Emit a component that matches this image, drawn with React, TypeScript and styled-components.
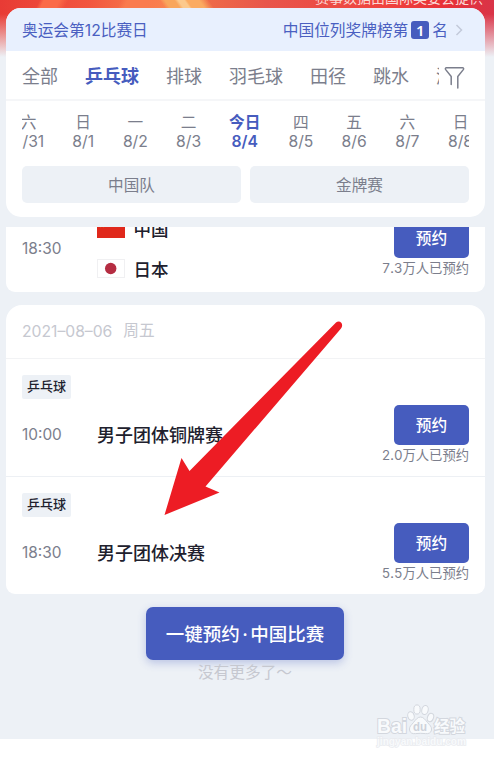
import React from 'react';
import styled, { createGlobalStyle } from 'styled-components';

const Global = createGlobalStyle`
  *, *::before, *::after { box-sizing: border-box; }
  body {
    margin: 0;
    background: #fff;
    font-family: Inter, 'Noto Sans CJK SC', sans-serif;
    color: #7b7e8c;
  }
`;

const Page = styled.main`
  position: relative;
  width: 494px;
  height: 759px;
  overflow: hidden;
  background: #fff;
`;

const Screen = styled.div`
  height: 739px;
  padding: 0 9px 0 6px;
  background:
    linear-gradient(180deg, transparent 14px, #edf1f6 57px) 0 0 / 100% 58px no-repeat,
    linear-gradient(55deg, transparent 0 136px, #f9a65c 140px 148px, #fcc98c 151px 156px, #fbab62 158px 168px, transparent 176px) 0 0 / 240px 9px no-repeat,
    linear-gradient(115deg, transparent 0 36px, #fb6a48 40px 54px, transparent 62px 110px, #fa7b4e 116px 134px, transparent 190px) 0 0 / 100% 9px no-repeat,
    linear-gradient(90deg, #e83b35 0, #f2553f 18%, #f67a4b 29%, #f8a055 36%, #ee6a48 42%, #e8554b 54%, #f0433f 78%, #e83138 90%, #d93448 100%) 0 0 / 100% 58px no-repeat,
    #edf1f6;
`;

const Credit = styled.div`
  height: 8px;
  padding-right: 2px;
  display: flex;
  align-items: flex-end;
  justify-content: flex-end;
  overflow: hidden;
  font-size: 14px;
  line-height: 18px;
  color: #fbd9d6;
  span { margin-bottom: 1px; white-space: nowrap; }
`;

const FilterPanel = styled.section`
  height: 209px;
  border-radius: 15px;
  overflow: hidden;
  background: #fff;
`;

const MedalBar = styled.header`
  height: 43px;
  padding: 2px 22px 0 16px;
  display: flex;
  align-items: center;
  background: #e8f0fe;
  color: #4a5fc1;
  font-size: 15.7px;
  line-height: 24px;
`;

const MedalRank = styled.div`
  margin-left: auto;
  display: flex;
  align-items: center;
`;

const RankBadge = styled.b`
  width: 18px;
  height: 18px;
  margin: -1px 3px 0;
  border-radius: 3px;
  background: #465cbe;
  color: #fff;
  font: 600 15px/18px 'Noto Sans', sans-serif;
  text-align: center;
`;

const Chevron = styled.svg`
  width: 8px;
  height: 12px;
  margin: -1px 0 0 7px;
  fill: none;
  stroke: #c3cada;
  stroke-width: 1.5;
`;

const TabBar = styled.nav`
  height: 50px;
  padding: 3px 19px 0 16px;
  display: flex;
  align-items: center;
  border-bottom: 2px solid #f5f6f8;
`;

const TabList = styled.div`
  width: 417px;
  display: flex;
  gap: 27px;
  overflow: hidden;
  font-size: 18px;
  line-height: 26px;
`;

const Tab = styled.span<{ $active?: boolean }>`
  flex: none;
  color: ${p => (p.$active ? '#465cbe' : '#7b7e8c')};
  font-weight: ${p => (p.$active ? 700 : 400)};
`;

const FilterIcon = styled.svg`
  width: 22px;
  height: 24px;
  margin: 2px 0 0 5px;
  flex: none;
  fill: none;
  stroke: #7b7e8c;
  stroke-width: 1.5;
  stroke-linejoin: round;
  stroke-linecap: round;
`;

const DateStrip = styled.div`
  height: 65px;
  margin: 0 16px;
  padding-top: 11px;
  display: flex;
  gap: 27.2px;
  overflow: hidden;
`;

const DateCell = styled.div<{ $width: number; $today?: boolean; $first?: boolean }>`
  flex: none;
  width: ${p => p.$width}px;
  margin-left: ${p => (p.$first ? '-9px' : 0)};
  display: flex;
  flex-direction: column;
  align-items: center;
  white-space: nowrap;
  font-size: 15.7px;
  line-height: 20px;
  color: ${p => (p.$today ? '#465cbe' : '#7b7e8c')};
  font-weight: ${p => (p.$today ? 600 : 400)};
  span:first-child { margin: 1px 0 -1px; }
`;

const ChipRow = styled.div`
  padding: 0 16px;
  display: flex;
  gap: 9px;
`;

const Chip = styled.button`
  flex: 1;
  height: 37px;
  padding: 2px 0 0;
  border: 0;
  border-radius: 5px;
  background: #edf1f6;
  color: #7b7e8c;
  font: inherit;
  font-size: 15.6px;
  line-height: 35px;
`;

const Card = styled.section<{ $scrolled?: boolean }>`
  margin-top: ${p => (p.$scrolled ? 10 : 13)}px;
  height: ${p => (p.$scrolled ? 65 : 289)}px;
  border-radius: ${p => (p.$scrolled ? '0 0 9px 9px' : '16px 16px 9px 9px')};
  overflow: hidden;
  background: #fff;
`;

const ScrolledRow = styled.div`
  height: 65px;
  padding: 0 16px;
  display: flex;
  align-items: flex-end;
`;

const Time = styled.time`
  width: 75px;
  font-size: 15.4px;
  line-height: 20px;
  color: #7b7e8c;
`;

const ScrolledTime = styled(Time)`
  margin-bottom: 33px;
`;

const Teams = styled.div`
  display: flex;
  flex-direction: column;
  gap: 15px;
  margin-bottom: 11px;
`;

const Team = styled.div`
  display: flex;
  align-items: center;
  height: 25px;
  gap: 9px;
  color: #20202d;
  font-size: 17.5px;
  font-weight: 500;
`;

const Flag = styled.svg`
  width: 28px;
  height: 19px;
  margin-left: -0.5px;
`;

const CardDate = styled.header`
  height: 54px;
  padding: 0 16px;
  display: flex;
  align-items: center;
  gap: 11px;
  border-bottom: 1px solid #f2f3f5;
  color: #c6c8d0;
  font-size: 15.7px;
  line-height: 24px;
  span:last-child { margin-top: -1px; }
`;

const Match = styled.article<{ $last?: boolean }>`
  height: ${p => (p.$last ? 117 : 118)}px;
  padding: 16px 16px 0;
  border-bottom: ${p => (p.$last ? 0 : 1)}px solid #edf0f4;
`;

const Sport = styled.div`
  width: 49px;
  height: 24px;
  border-radius: 2px;
  background: #edf1f6;
  color: #20202d;
  font-size: 13px;
  font-weight: 500;
  line-height: 23px;
  text-align: center;
`;

const MatchBody = styled.div`
  height: 60px;
  margin-top: 6px;
  display: flex;
  align-items: flex-start;
`;

const MatchTime = styled(Time)`
  margin-top: 20px;
`;

const MatchName = styled.h3`
  margin: 18px 0 0;
  color: #20202d;
  font-size: 18px;
  font-weight: 500;
  line-height: 26px;
`;

const Booking = styled.div`
  margin-left: auto;
  display: flex;
  flex-direction: column;
  align-items: flex-end;
`;

const ScrolledBooking = styled(Booking)`
  margin-bottom: 14px;
`;

const BookButton = styled.button`
  width: 75px;
  height: 40px;
  padding: 2px 0 0;
  border: 0;
  border-radius: 5px;
  background: #465cbe;
  color: #fff;
  font: inherit;
  font-size: 15.7px;
  font-weight: 500;
  line-height: 38px;
`;

const BookCount = styled.span`
  height: 20px;
  color: #7b7e8c;
  font-size: 13.3px;
  font-variant-numeric: tabular-nums;
  line-height: 21px;
  white-space: nowrap;
`;

const BottomArea = styled.footer`
  padding: 13px 1px 0 0;
  display: flex;
  flex-direction: column;
  align-items: center;
`;

const BookAll = styled.button`
  width: 198px;
  height: 53px;
  padding: 0 0 2px;
  border: 0;
  border-radius: 7px;
  background: #465cbe;
  box-shadow: 0 3px 8px rgba(70, 92, 190, 0.3);
  color: #fff;
  font: inherit;
  font-size: 18.5px;
  font-weight: 500;
`;

const Dot = styled.span`
  margin: 0 2.5px;
`;

const EndNote = styled.p`
  margin: 0;
  color: #c6c8d0;
  font-size: 15.7px;
  line-height: 26px;
`;

const Arrow = styled.svg`
  position: absolute;
  left: 160px;
  top: 318px;
  width: 190px;
  height: 202px;
  pointer-events: none;
`;

const Watermark = styled.svg`
  position: absolute;
  left: 370px;
  top: 700px;
  width: 100px;
  height: 50px;
`;

const tabs = ['全部', '乒乓球', '排球', '羽毛球', '田径', '跳水', '游泳'];

const dates = [
  { day: '六', date: '8/31', width: 31 },
  { day: '日', date: '8/1', width: 24 },
  { day: '一', date: '8/2', width: 26 },
  { day: '二', date: '8/3', width: 26 },
  { day: '今日', date: '8/4', width: 32 },
  { day: '四', date: '8/5', width: 26 },
  { day: '五', date: '8/6', width: 26 },
  { day: '六', date: '8/7', width: 26 },
  { day: '日', date: '8/8', width: 26 },
];

const matches = [
  { time: '10:00', name: '男子团体铜牌赛', count: '2.0万人已预约' },
  { time: '18:30', name: '男子团体决赛', count: '5.5万人已预约' },
];

export default function App() {
  return (
    <Page>
      <Global />
      <Screen>
        <Credit><span>赛事数据由国际奥委会提供</span></Credit>
        <FilterPanel>
          <MedalBar>
            <span>奥运会第12比赛日</span>
            <MedalRank>
              中国位列奖牌榜第<RankBadge>1</RankBadge>名
              <Chevron viewBox="0 0 8 12"><path d="M1.5 1 6.5 6l-5 5" /></Chevron>
            </MedalRank>
          </MedalBar>
          <TabBar>
            <TabList>
              {tabs.map(t => <Tab key={t} $active={t === '乒乓球'}>{t}</Tab>)}
            </TabList>
            <FilterIcon viewBox="0 0 22 24">
              <path d="M7.2 18.5V10.5L1.7 3.6Q.7 1.8 2.6 1.8H18.4Q20.3 1.8 19.3 3.6L13.8 10.5V22" />
            </FilterIcon>
          </TabBar>
          <DateStrip>
            {dates.map((d, i) => (
              <DateCell key={d.date} $width={d.width} $today={d.day === '今日'} $first={i === 0}>
                <span>{d.day}</span>
                <span>{d.date}</span>
              </DateCell>
            ))}
          </DateStrip>
          <ChipRow>
            <Chip>中国队</Chip>
            <Chip>金牌赛</Chip>
          </ChipRow>
        </FilterPanel>

        <Card $scrolled>
          <ScrolledRow>
            <ScrolledTime>18:30</ScrolledTime>
            <Teams>
              <Team>
                <Flag viewBox="0 0 28 19">
                  <rect width="28" height="19" fill="#e0281b" />
                  <path d="m5 2 .8 2.5h2.6L6.3 6l.8 2.5L5 7 2.9 8.5 3.7 6 1.6 4.5h2.6z" fill="#fd0" />
                </Flag>
                中国
              </Team>
              <Team>
                <Flag viewBox="0 0 28 19">
                  <rect x=".5" y=".5" width="27" height="18" fill="#fff" stroke="#f0f0f2" />
                  <circle cx="13.7" cy="9.5" r="5.7" fill="#b52d42" />
                </Flag>
                日本
              </Team>
            </Teams>
            <ScrolledBooking>
              <BookButton>预约</BookButton>
              <BookCount>7.3万人已预约</BookCount>
            </ScrolledBooking>
          </ScrolledRow>
        </Card>

        <Card>
          <CardDate><span>2021–08–06</span><span>周五</span></CardDate>
          {matches.map((m, i) => (
            <Match key={m.name} $last={i === matches.length - 1}>
              <Sport>乒乓球</Sport>
              <MatchBody>
                <MatchTime>{m.time}</MatchTime>
                <MatchName>{m.name}</MatchName>
                <Booking>
                  <BookButton>预约</BookButton>
                  <BookCount>{m.count}</BookCount>
                </Booking>
              </MatchBody>
            </Match>
          ))}
        </Card>

        <BottomArea>
          <BookAll>一键预约<Dot>·</Dot>中国比赛</BookAll>
          <EndNote>没有更多了～</EndNote>
        </BottomArea>
      </Screen>

      <Arrow viewBox="160 318 190 202">
        <path
          d="M164.500 515 181.500 458 189.500 471 336 322.500Q339 320.500 341.500 323 343 326 341 328.500L205.500 486.500 219.500 492.500Z"
          fill="#ed1c24"
        />
      </Arrow>

      <Watermark viewBox="370 700 100 50">
        <g fill="#f8fafc" stroke="#d3d7de" strokeWidth="1">
          <ellipse cx="411" cy="716" rx="3.2" ry="4.3" transform="rotate(-15 411 716)" />
          <ellipse cx="417" cy="709.500" rx="3.200" ry="4.600" />
          <ellipse cx="425" cy="710" rx="3.200" ry="4.600" transform="rotate(12 425 710)" />
          <ellipse cx="430.500" cy="717.500" rx="3" ry="4.300" transform="rotate(20 430.500 717.500)" />
          <path d="M420.500 717c3 0 5 3 7 5.500s4.500 4 4 7.500c-.5 3-3 4-6 3.600-3-.4-7-.4-10 0-3 .4-5.500-.6-6-3.600-.5-3.500 2-5 4-7.500s4-5.500 7-5.500z" />
          <g strokeWidth="2" paintOrder="stroke">
            <text x="377" y="732.500" fontFamily="Liberation Sans" fontWeight="700" fontSize="20" textLength="30" lengthAdjust="spacingAndGlyphs">Bai</text>
            <text x="434" y="731.500" fontFamily="Noto Sans CJK SC" fontWeight="700" fontSize="16" textLength="31" lengthAdjust="spacingAndGlyphs">经验</text>
          </g>
          <text x="377" y="744.500" fontFamily="Liberation Sans" fontWeight="700" fontSize="10" textLength="89" lengthAdjust="spacingAndGlyphs" stroke="#e9ebef" strokeWidth="1.500" paintOrder="stroke">jingyan.baidu.com</text>
        </g>
        <text x="413" y="730.500" fontFamily="Liberation Sans" fontWeight="700" fontSize="13" textLength="14" lengthAdjust="spacingAndGlyphs" fill="#ced2da">du</text>
      </Watermark>
    </Page>
  );
}
